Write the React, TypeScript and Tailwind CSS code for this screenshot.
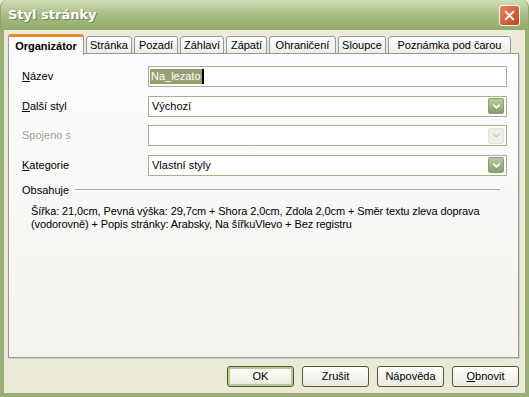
import { ChevronDown, X } from "lucide-react";

const tabs = [
  { label: "Stránka", w: "w-[46px]" },
  { label: "Pozadí", w: "w-[44px]" },
  { label: "Záhlaví", w: "w-[44px]" },
  { label: "Zápatí", w: "w-[41px]" },
  { label: "Ohraničení", w: "w-[67px]" },
  { label: "Sloupce", w: "w-[48px]" },
  { label: "Poznámka pod čarou", w: "w-[123px]" },
];

function Combo({ value, disabled }: { value?: string; disabled?: boolean }) {
  return (
    <div className="flex-1 h-[21px] flex items-center bg-white border border-[#a7b08c] pl-[3px] pr-[2px]">
      <span className="flex-1 text-[11px] text-black">{value}</span>
      {disabled ? (
        <div className="w-[16px] h-[16px] flex items-center justify-center rounded-[2px] bg-[#eeeee6] border border-[#e2e2d8]">
          <ChevronDown size={11} strokeWidth={3} className="text-[#c9c9bf]" />
        </div>
      ) : (
        <div className="w-[16px] h-[16px] flex items-center justify-center rounded-[2px] bg-gradient-to-b from-[#bccaa4] to-[#8a9c6c] border border-[#8a9b70]">
          <ChevronDown size={11} strokeWidth={3.5} className="text-white" />
        </div>
      )}
    </div>
  );
}

function Row({
  label,
  accel,
  disabled,
  children,
}: {
  label: string;
  accel?: boolean;
  disabled?: boolean;
  children: React.ReactNode;
}) {
  return (
    <div className="flex items-center">
      <span className={`w-[126px] text-[11px] ${disabled ? "text-[#a1a192]" : "text-black"}`}>
        {accel ? (
          <>
            <span className="underline">{label[0]}</span>
            {label.slice(1)}
          </>
        ) : (
          label
        )}
      </span>
      {children}
    </div>
  );
}

function Button({ label, def, accel }: { label: string; def?: boolean; accel?: boolean }) {
  return (
    <div
      className={`w-[67px] h-[21px] flex items-center justify-center rounded-[3px] border border-[#4b5a36] bg-gradient-to-b from-white to-[#eceade] text-[11px] text-black ${
        def ? "shadow-[inset_0_0_0_2px_#b5c991]" : ""
      }`}
    >
      {accel ? (
        <span>
          <span className="underline">{label[0]}</span>
          {label.slice(1)}
        </span>
      ) : (
        label
      )}
    </div>
  );
}

export default function App() {
  return (
    <div className="w-[529px] h-[397px] flex flex-col bg-[#ece9d8] font-['Liberation_Sans',sans-serif] text-[11px] overflow-hidden">
      {/* Title bar */}
      <div className="h-[30px] shrink-0 flex items-center justify-between px-[7px] rounded-t-[7px] bg-gradient-to-b from-[#d3dfb8] via-[#a8bc84] to-[#93aa6b] border-x border-[#8da566]">
        <span className="font-['DejaVu_Sans',sans-serif] font-bold text-[13px] text-white [text-shadow:1px_1px_0_#6e8450]">
          Styl stránky
        </span>
        <div className="w-[21px] h-[21px] flex items-center justify-center rounded-[3px] border border-white bg-gradient-to-br from-[#e6855e] to-[#c4401b] mr-[1px]">
          <X size={15} strokeWidth={3} className="text-white" />
        </div>
      </div>

      {/* Body */}
      <div className="flex-1 flex flex-col border-x-4 border-b-4 border-[#9aae78] pl-[4px] pr-[6px] pt-[4px]">
        {/* Tabs */}
        <div className="flex items-end h-[20px] -mb-[1px] relative z-10">
          <div className="w-[76px] h-[21px] flex items-center justify-center rounded-t-[3px] border-x border-t-[3px] border-[#e68b2c] border-x-[#919b9c] bg-[#fcfcfe] font-bold text-[11px] text-black -mb-[1px]">
            Organizátor
          </div>
          {tabs.map((t) => (
            <div
              key={t.label}
              className={`${t.w} h-[18px] ml-[2px] flex items-center justify-center rounded-t-[3px] border-x border-t border-[#919b9c] border-b border-b-[#919b9c] bg-gradient-to-b from-white to-[#ecebe5] text-[11px] text-black`}
            >
              {t.label}
            </div>
          ))}
        </div>

        {/* Panel */}
        <div className="h-[305px] flex flex-col border border-[#919b9c] shadow-[1px_1px_0_#d0cfc4] bg-gradient-to-b from-[#fcfcfe] to-[#f4f3ee] pl-[13px] pr-[11px] pt-[12px]">
          <div className="flex flex-col gap-[8.5px]">
            <Row label="Název" accel>
              <div className="flex-1 h-[21px] flex items-center bg-white border border-[#a7b08c] pl-[1px]">
                <span className="bg-[#94a072] text-white text-[11px] leading-[15px] px-[1px]">Na_lezato</span>
                <span className="w-[2px] h-[15px] bg-black" />
              </div>
            </Row>
            <Row label="Další styl" accel>
              <Combo value="Výchozí" />
            </Row>
            <Row label="Spojeno s" disabled>
              <Combo disabled />
            </Row>
            <Row label="Kategorie" accel>
              <Combo value="Vlastní styly" />
            </Row>
          </div>

          <div className="flex items-center mt-[6px] pr-[7px]">
            <span className="text-[11px] text-black">Obsahuje</span>
            <div className="flex-1 h-px bg-[#a9a89a] ml-[6px]" />
          </div>
          <p className="mt-[7px] pl-[9px] pr-0 text-[11px] leading-[13px] text-black tracking-[-0.1px]">
            Šířka: 21,0cm, Pevná výška: 29,7cm + Shora 2,0cm, Zdola 2,0cm + Směr textu zleva doprava
            (vodorovně) + Popis stránky: Arabsky, Na šířkuVlevo + Bez registru
          </p>
        </div>

        {/* Buttons */}
        <div className="flex justify-end gap-[8px] mt-[8px] pr-[0px]">
          <Button label="OK" def />
          <Button label="Zrušit" />
          <Button label="Nápověda" />
          <Button label="Obnovit" accel />
        </div>
      </div>
    </div>
  );
}
